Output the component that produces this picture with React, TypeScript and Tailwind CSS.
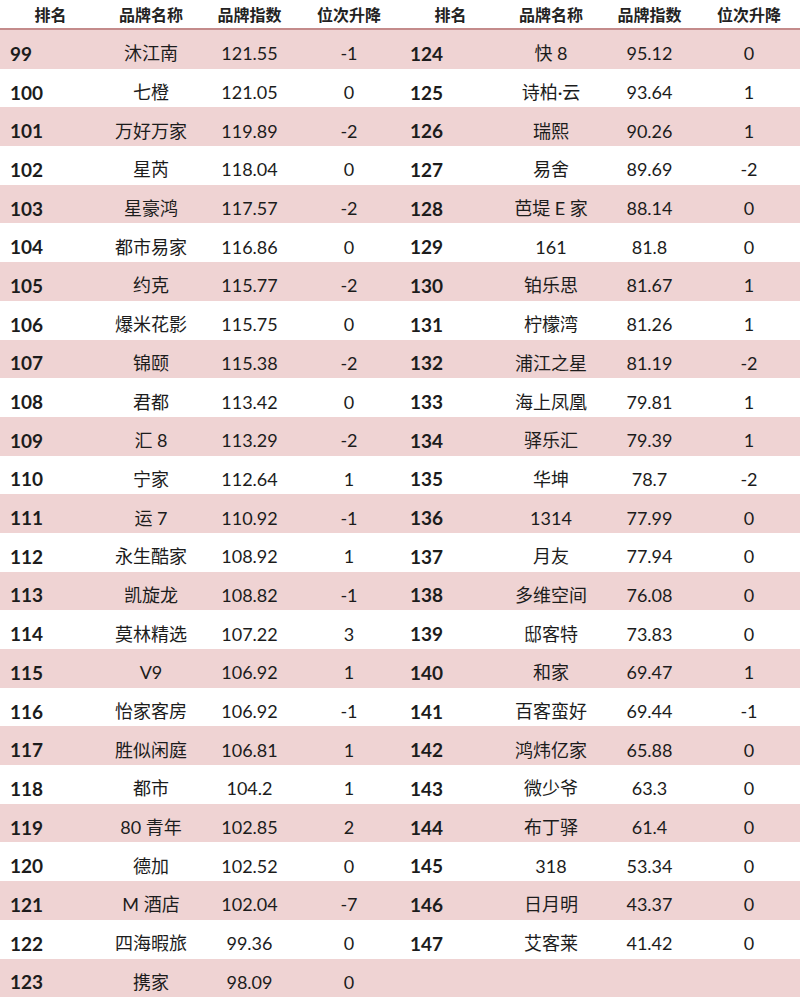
type Row = [string, string, string, string];

const left: Row[] = [
  ['99', '沐江南', '121.55', '-1'],
  ['100', '七橙', '121.05', '0'],
  ['101', '万好万家', '119.89', '-2'],
  ['102', '星芮', '118.04', '0'],
  ['103', '星豪鸿', '117.57', '-2'],
  ['104', '都市易家', '116.86', '0'],
  ['105', '约克', '115.77', '-2'],
  ['106', '爆米花影', '115.75', '0'],
  ['107', '锦颐', '115.38', '-2'],
  ['108', '君都', '113.42', '0'],
  ['109', '汇 8', '113.29', '-2'],
  ['110', '宁家', '112.64', '1'],
  ['111', '运 7', '110.92', '-1'],
  ['112', '永生酷家', '108.92', '1'],
  ['113', '凯旋龙', '108.82', '-1'],
  ['114', '莫林精选', '107.22', '3'],
  ['115', 'V9', '106.92', '1'],
  ['116', '怡家客房', '106.92', '-1'],
  ['117', '胜似闲庭', '106.81', '1'],
  ['118', '都市', '104.2', '1'],
  ['119', '80 青年', '102.85', '2'],
  ['120', '德加', '102.52', '0'],
  ['121', 'M 酒店', '102.04', '-7'],
  ['122', '四海暇旅', '99.36', '0'],
  ['123', '携家', '98.09', '0'],
];

const right: Row[] = [
  ['124', '快 8', '95.12', '0'],
  ['125', '诗柏·云', '93.64', '1'],
  ['126', '瑞熙', '90.26', '1'],
  ['127', '易舍', '89.69', '-2'],
  ['128', '芭堤 E 家', '88.14', '0'],
  ['129', '161', '81.8', '0'],
  ['130', '铂乐思', '81.67', '1'],
  ['131', '柠檬湾', '81.26', '1'],
  ['132', '浦江之星', '81.19', '-2'],
  ['133', '海上凤凰', '79.81', '1'],
  ['134', '驿乐汇', '79.39', '1'],
  ['135', '华坤', '78.7', '-2'],
  ['136', '1314', '77.99', '0'],
  ['137', '月友', '77.94', '0'],
  ['138', '多维空间', '76.08', '0'],
  ['139', '邸客特', '73.83', '0'],
  ['140', '和家', '69.47', '1'],
  ['141', '百客蛮好', '69.44', '-1'],
  ['142', '鸿炜亿家', '65.88', '0'],
  ['143', '微少爷', '63.3', '0'],
  ['144', '布丁驿', '61.4', '0'],
  ['145', '318', '53.34', '0'],
  ['146', '日月明', '43.37', '0'],
  ['147', '艾客莱', '41.42', '0'],
  ['', '', '', ''],
];

const cols = 'grid grid-cols-[101px_100px_97px_102px]';

function Half({ rows }: { rows: Row[] }) {
  return (
    <div className="w-[400px]">
      <div className={`${cols} h-[28px] items-center text-[16px] font-bold text-[#222]`}>
        <div className="text-center pt-[2px]">排名</div>
        <div className="text-center pt-[2px]">品牌名称</div>
        <div className="text-center pt-[2px]">品牌指数</div>
        <div className="text-center pt-[2px]">位次升降</div>
      </div>
      <div className="h-[2px] bg-[#c48b8b]" />
      {rows.map((r, i) => (
        <div
          key={i}
          className={`${cols} h-[38.7px] items-center pt-[8px] text-[18px] leading-none text-[#1c1c1c] ${
            i % 2 === 0 ? 'bg-[#efd3d3]' : 'bg-white'
          }`}
        >
          <div className="pl-[10px] font-bold text-[19px]">{r[0]}</div>
          <div className="text-center">{r[1]}</div>
          <div className="text-center">{r[2]}</div>
          <div className="text-center">{r[3]}</div>
        </div>
      ))}
    </div>
  );
}

export default function App() {
  return (
    <div
      className="w-[800px] h-[997px] overflow-hidden bg-white flex"
      style={{ fontFamily: 'Lato, "Noto Sans CJK SC", sans-serif' }}
    >
      <Half rows={left} />
      <Half rows={right} />
    </div>
  );
}
